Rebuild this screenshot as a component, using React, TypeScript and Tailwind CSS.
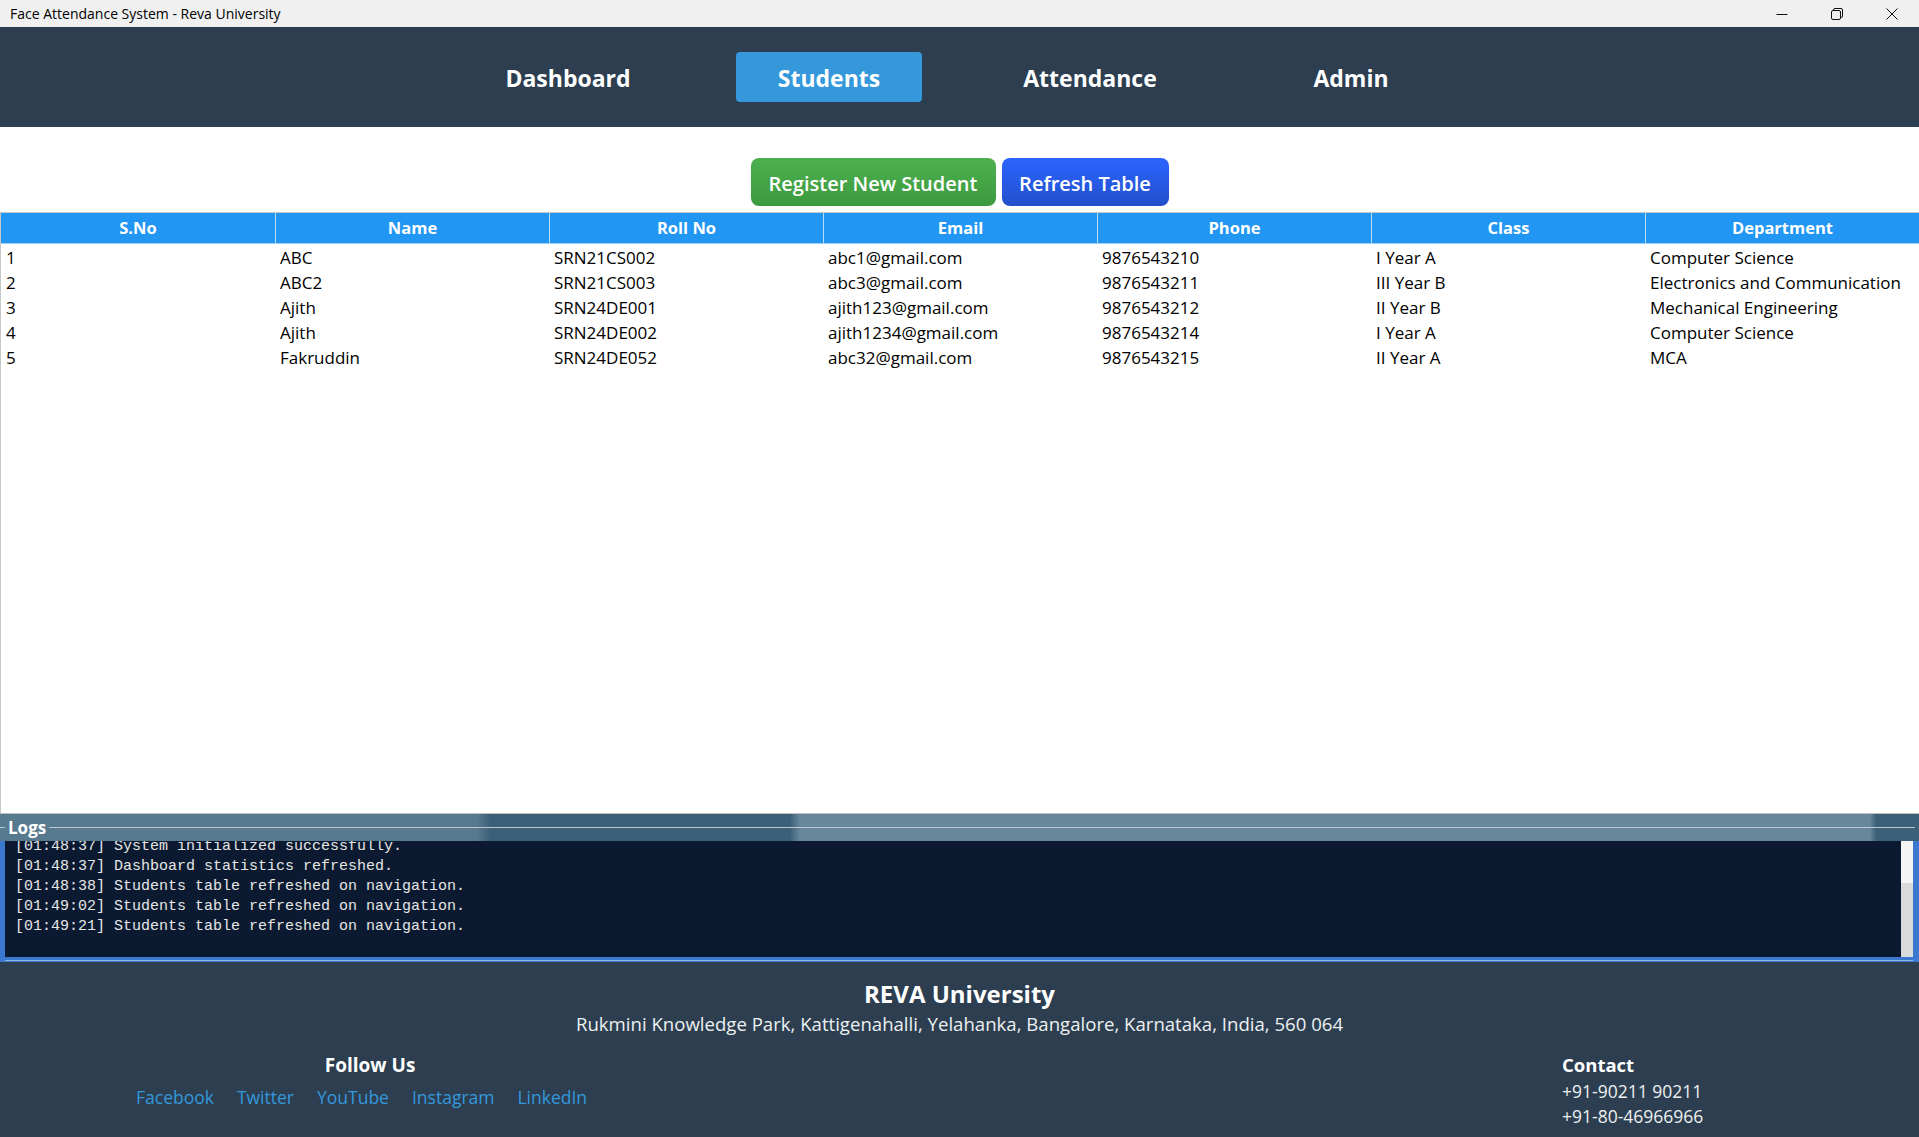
import { Fragment } from "react";

const NAV = ["Dashboard", "Students", "Attendance", "Admin"];
const COLUMNS = ["S.No", "Name", "Roll No", "Email", "Phone", "Class", "Department"];

const STUDENTS = [
  ["1", "ABC", "SRN21CS002", "abc1@gmail.com", "9876543210", "I Year A", "Computer Science"],
  ["2", "ABC2", "SRN21CS003", "abc3@gmail.com", "9876543211", "III Year B", "Electronics and Communication"],
  ["3", "Ajith", "SRN24DE001", "ajith123@gmail.com", "9876543212", "II Year B", "Mechanical Engineering"],
  ["4", "Ajith", "SRN24DE002", "ajith1234@gmail.com", "9876543214", "I Year A", "Computer Science"],
  ["5", "Fakruddin", "SRN24DE052", "abc32@gmail.com", "9876543215", "II Year A", "MCA"],
];

const LOGS = [
  "[01:48:37] System initialized successfully.",
  "[01:48:37] Dashboard statistics refreshed.",
  "[01:48:38] Students table refreshed on navigation.",
  "[01:49:02] Students table refreshed on navigation.",
  "[01:49:21] Students table refreshed on navigation.",
];

const LINKS = ["Facebook", "Twitter", "YouTube", "Instagram", "LinkedIn"];

function TitleBar() {
  return (
    <div className="flex h-[27px] items-center bg-[#f0f0f0] pl-[10px] text-[14px] text-black">
      <span>Face Attendance System - Reva University</span>
      <div className="ml-auto flex h-full items-center">
        <div className="flex h-full w-[55px] items-center justify-center">
          <svg width="12" height="12" viewBox="0 0 12 12">
            <path d="M0.5 6.5h11" stroke="#111" strokeWidth="1" />
          </svg>
        </div>
        <div className="flex h-full w-[55px] items-center justify-center">
          <svg width="12" height="12" viewBox="0 0 12 12" fill="none" stroke="#111" strokeWidth="1">
            <rect x="0.5" y="2.5" width="9" height="9" rx="1.5" />
            <path d="M2.5 2.5V2a1.5 1.5 0 0 1 1.5-1.5h6A1.5 1.5 0 0 1 11.5 2v6a1.5 1.5 0 0 1-1.5 1.5h-.5" />
          </svg>
        </div>
        <div className="flex h-full w-[55px] items-center justify-center">
          <svg width="12" height="12" viewBox="0 0 12 12" stroke="#111" strokeWidth="1">
            <path d="M0.5 0.5l11 11M11.5 0.5l-11 11" />
          </svg>
        </div>
      </div>
    </div>
  );
}

function NavBar() {
  return (
    <nav className="flex h-[100px] items-center justify-center gap-[75px] bg-[#2c3e50]">
      {NAV.map((item) => (
        <div
          key={item}
          className={`flex h-[50px] w-[186px] items-center justify-center rounded-[4px] pt-[2px] text-[23px] font-bold text-white ${
            item === "Students" ? "bg-[#3498db]" : ""
          }`}
        >
          {item}
        </div>
      ))}
    </nav>
  );
}

function StudentsTable() {
  return (
    <div className="flex-1 border-l border-t border-[#c8c8c8] bg-white">
      <div className="grid grid-cols-7 border-b border-[#9fd0fb] bg-[#2196f3]">
        {COLUMNS.map((col, i) => (
          <div
            key={col}
            className={`flex h-[30px] items-center justify-center text-[16.5px] font-bold text-white ${
              i > 0 ? "border-l border-[#b9dcfb]" : ""
            }`}
          >
            {col}
          </div>
        ))}
      </div>
      <div className="grid grid-cols-7 pt-[1px] text-[17px] text-black">
        {STUDENTS.map((row) => (
          <Fragment key={row[0]}>
            {row.map((cell, i) => (
              <div key={i} className="h-[25px] whitespace-nowrap pl-[5px] leading-[25px]">
                {cell}
              </div>
            ))}
          </Fragment>
        ))}
      </div>
    </div>
  );
}

function LogsPanel() {
  return (
    <section className="flex h-[149px] flex-col border-t border-[#bdbdbd] bg-[linear-gradient(90deg,#587a8f_0px,#587a8f_477px,#3d6079_490px,#3d6079_790px,#68879a_800px,#68879a_1870px,#3d6079_1876px)]">
      <div className="flex h-[27px] items-center">
        <div className="h-px w-[5px] bg-[#b8c8d3]" />
        <span className="px-[3px] text-[17px] font-bold leading-none text-white">Logs</span>
        <div className="h-px flex-1 bg-[#b8c8d3]" />
        <div className="w-[4px]" />
      </div>
      <div className="flex flex-1 flex-col bg-[#3b78d0] pl-[5px] pr-[6px]">
        <div className="flex h-[116px] bg-[#0b1a30]">
          <div className="flex-1 overflow-hidden pl-[10px] font-['Liberation_Mono',monospace] text-[15px] leading-[20px] text-[#e6e6e6]">
            <div className="-mt-[4px]">
              {LOGS.map((line, i) => (
                <div key={i} className="whitespace-pre">
                  {line}
                </div>
              ))}
            </div>
          </div>
          <div className="flex w-[12px] flex-col">
            <div className="h-[42px] bg-[#f4f4f4]" />
            <div className="flex-1 bg-[#dadada]" />
          </div>
        </div>
        <div className="h-[5px] bg-[linear-gradient(#3b78d0_0px,#3b78d0_3px,#8fb4e6_3px,#8fb4e6_4px,#3b78d0_4px)]" />
      </div>
    </section>
  );
}

function Footer() {
  return (
    <footer className="h-[175px] bg-[#2c3e50] pt-[16px] text-white">
      <div className="text-center text-[24px] font-bold leading-[32px]">REVA University</div>
      <div className="text-center text-[18.6px] leading-[28px] text-[#ecf0f1]">
        Rukmini Knowledge Park, Kattigenahalli, Yelahanka, Bangalore, Karnataka, India, 560 064
      </div>
      <div className="mt-[14px] flex">
        <div className="ml-[136px] flex flex-col items-center">
          <div className="pl-[17px] text-[19px] font-bold leading-[26px]">Follow Us</div>
          <div className="mt-[6px] flex gap-[23px] text-[17.5px] leading-[26px] text-[#3498db]">
            {LINKS.map((l) => (
              <span key={l}>{l}</span>
            ))}
          </div>
        </div>
        <div className="ml-auto w-[357px]">
          <div className="text-[18.5px] font-bold leading-[26px]">Contact</div>
          <div className="text-[17.5px] leading-[26px] text-[#ecf0f1]">+91-90211 90211</div>
          <div className="text-[17.5px] leading-[25px] text-[#ecf0f1]">+91-80-46966966</div>
        </div>
      </div>
    </footer>
  );
}

export default function App() {
  return (
    <div className="flex h-[1137px] w-[1919px] flex-col overflow-hidden bg-white font-['Open_Sans',sans-serif]">
      <TitleBar />
      <NavBar />
      <main className="flex flex-1 flex-col bg-white">
        <div className="flex justify-center gap-[6px] pt-[31px] pb-[6px]">
          <button className="h-[48px] w-[245px] rounded-[8px] bg-[linear-gradient(#4db050,#3c9a3e)] pt-[3px] text-[20px] font-semibold text-white">
            Register New Student
          </button>
          <button className="h-[48px] w-[167px] rounded-[8px] bg-[linear-gradient(#2b64ff,#2250cc)] pt-[3px] text-[20px] font-semibold text-white">
            Refresh Table
          </button>
        </div>
        <StudentsTable />
      </main>
      <LogsPanel />
      <Footer />
    </div>
  );
}
